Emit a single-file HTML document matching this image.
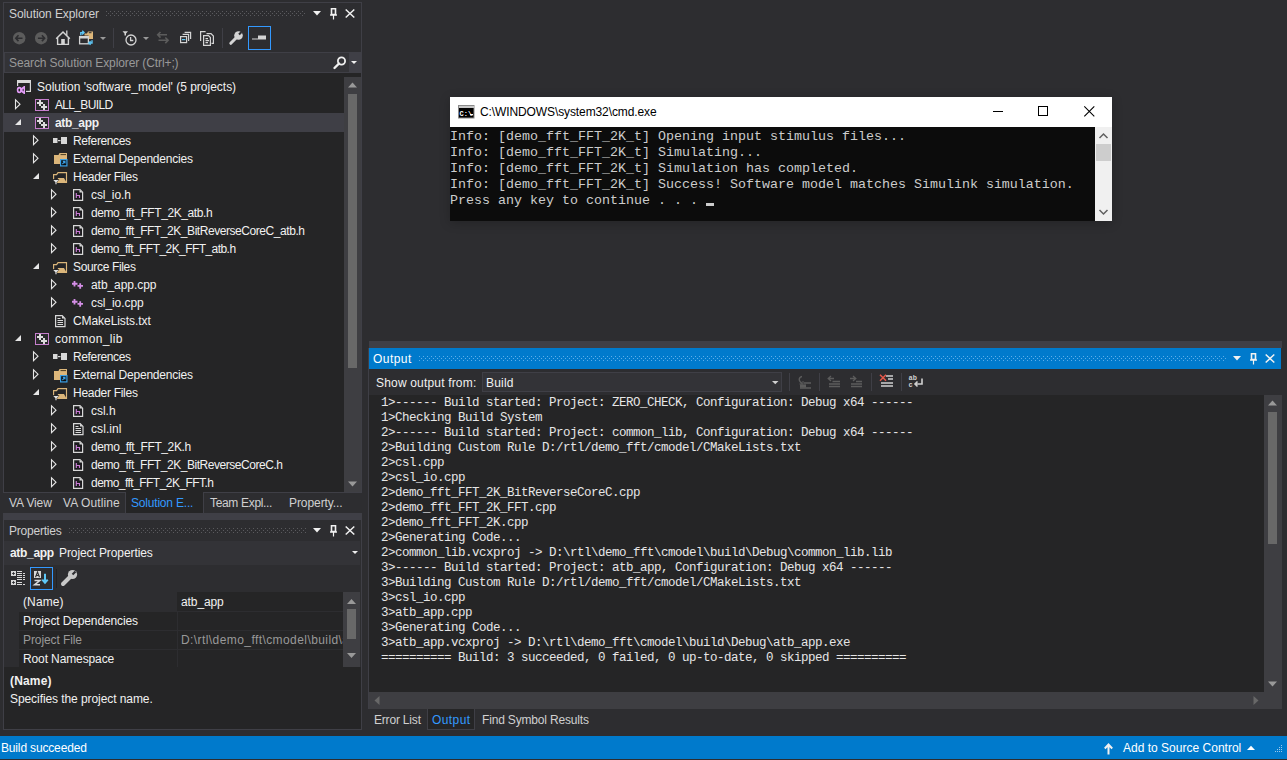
<!DOCTYPE html>
<html><head><meta charset="utf-8">
<style>
*{margin:0;padding:0;box-sizing:border-box}
html,body{width:1287px;height:760px;overflow:hidden;background:#2d2d30;font-family:"Liberation Sans",sans-serif;font-size:12px;color:#f1f1f1}
.a{position:absolute}
.t{position:absolute;white-space:pre;line-height:14px}
.mono{font-family:"Liberation Mono",monospace}
svg{position:absolute;overflow:visible}
.grip{position:absolute;height:5px;background-image:radial-gradient(circle,#5a5a5e 0.6px,transparent 0.9px);background-size:4px 4px;background-position:0 0}
</style></head><body>

<!-- ============ SOLUTION EXPLORER ============ -->
<div class="a" style="left:3px;top:2px;width:359px;height:491px;border:1px solid #3f3f46;border-bottom:none;background:#2d2d30"></div>
<div class="t" style="left:9px;top:7px;color:#d0d0d0;letter-spacing:-0.088px">Solution Explorer</div>
<svg style="left:106px;top:11px" width="200" height="5"><defs><pattern id="g1" x="0" y="0" width="4" height="4" patternUnits="userSpaceOnUse"><rect x="0" y="0" width="1" height="1" fill="#5a5a5e"/><rect x="2" y="2" width="1" height="1" fill="#5a5a5e"/></pattern></defs><rect x="0" y="0" width="200" height="5" fill="url(#g1)"/></svg>
<!--se-title-btns-->
<svg style="left:313px;top:11px" width="9" height="5"><path d="M0 0 H8 L4 4.5 Z" fill="#f1f1f1"/></svg>
<svg style="left:330px;top:8px" width="8" height="12"><path d="M1.5 0.8 H5.5 V6.5 H1.5 Z" fill="none" stroke="#f1f1f1" stroke-width="1.6"/><path d="M0 7 H7" stroke="#f1f1f1" stroke-width="1.4"/><path d="M3.5 7 V11.5" stroke="#f1f1f1" stroke-width="1.2"/></svg>
<svg style="left:345px;top:9px" width="11" height="9"><path d="M0.7 0.5 L9.3 8.5 M9.3 0.5 L0.7 8.5" stroke="#f1f1f1" stroke-width="1.5"/></svg>
<!--/se-title-btns-->

<!-- toolbar -->
<!--se-toolbar-->
<svg style="left:13px;top:32px" width="13" height="13"><circle cx="6.2" cy="6.2" r="6.2" fill="#5c5c5c"/><path d="M2.8 6.2 H9.5 M5.5 3.3 L2.8 6.2 L5.5 9.1" fill="none" stroke="#2d2d30" stroke-width="1.6"/></svg>
<svg style="left:35px;top:32px" width="13" height="13"><circle cx="6.2" cy="6.2" r="6.2" fill="#5c5c5c"/><path d="M2.9 6.2 H9.6 M6.9 3.3 L9.6 6.2 L6.9 9.1" fill="none" stroke="#2d2d30" stroke-width="1.6"/></svg>
<svg style="left:55px;top:30px" width="17" height="17"><path d="M1.2 8.8 L8 2 L14.8 8.8" fill="none" stroke="#d4d4d4" stroke-width="1.5"/><path d="M2.6 7.5 V14.4 H13.4 V7.5" fill="none" stroke="#d4d4d4" stroke-width="1.4"/><path d="M11.8 0.5 V5.5" stroke="#d4d4d4" stroke-width="1.3"/><rect x="6.2" y="9" width="3.6" height="5.5" fill="#d4d4d4"/></svg>
<svg style="left:78px;top:30px" width="17" height="16"><path d="M6.5 3.5 H9 L10 1.5 H15 V9 H10.5 V5.5 H6.5 Z" fill="#dcb67a"/><path d="M10.8 2.7 H13.5" stroke="#2d2d30" stroke-width="1"/><rect x="1.6" y="6.6" width="8.8" height="7.2" fill="#2d2d30" stroke="#d4d4d4" stroke-width="1.3"/><path d="M1.6 7.6 H10.4" stroke="#d4d4d4" stroke-width="1.8"/><path d="M2.8 5.2 V2.6 H5.8 M4.2 0.8 L6 2.6 L4.2 4.4" fill="none" stroke="#5ec8f8" stroke-width="1.4"/><path d="M14 10.2 V13 H11 M12.6 11.2 L10.8 13 L12.6 14.8" fill="none" stroke="#5ec8f8" stroke-width="1.4"/></svg>
<svg style="left:100px;top:37px" width="7" height="4"><path d="M0 0 H6 L3 3 Z" fill="#999999"/></svg>
<div class="a" style="left:113px;top:28px;width:1px;height:20px;background:#3f3f46"></div>
<svg style="left:122px;top:30px" width="16" height="16"><path d="M0.5 1.2 H6 L4 3.5 V5.5 H2.5 V3.5 Z" fill="#d4d4d4"/><circle cx="9" cy="10" r="5" fill="none" stroke="#d4d4d4" stroke-width="1.3"/><path d="M8.6 7 V10.5 H11.3" fill="none" stroke="#d4d4d4" stroke-width="1.3"/></svg>
<svg style="left:143px;top:37px" width="7" height="4"><path d="M0 0 H6 L3 3 Z" fill="#999999"/></svg>
<svg style="left:156px;top:31px" width="14" height="13"><path d="M11 3.8 H2 M4.5 1 L1.7 3.8 L4.5 6.6 M2.5 9.3 H11.8 M9.3 6.5 L12.1 9.3 L9.3 12.1" fill="none" stroke="#5c5c5c" stroke-width="1.6"/></svg>
<svg style="left:179px;top:30px" width="14" height="14"><rect x="1.6" y="6.6" width="6" height="6" fill="#2d2d30" stroke="#d4d4d4" stroke-width="1.2"/><path d="M3.6 4.4 H9.6 V11 M5.6 2.4 H11.6 V9" fill="none" stroke="#d4d4d4" stroke-width="1.2"/><path d="M3 9.6 H6.4" stroke="#5ec8f8" stroke-width="1.2"/></svg>
<svg style="left:199px;top:30px" width="16" height="16"><path d="M1.6 11 V1.6 H6.6" fill="none" stroke="#d4d4d4" stroke-width="1.2"/><path d="M7.5 3.6 H12 L14.4 6 V13.4 H12.5" fill="none" stroke="#d4d4d4" stroke-width="1.2"/><path d="M4.6 5.6 H9.5 L11.4 7.5 V15.4 H4.6 Z" fill="#2d2d30" stroke="#d4d4d4" stroke-width="1.2"/><path d="M6.5 8.6 H9 M6.5 10.6 H10 M6.5 12.6 H9" stroke="#d4d4d4" stroke-width="1.1"/></svg>
<div class="a" style="left:222px;top:28px;width:1px;height:20px;background:#3f3f46"></div>
<svg style="left:229px;top:30px" width="16" height="16"><path d="M1.8 13.3 L7 8" stroke="#d4d4d4" stroke-width="3" stroke-linecap="round"/><circle cx="9.5" cy="5.5" r="4.3" fill="#d4d4d4"/><path d="M10 4.5 L12.5 2" stroke="#2d2d30" stroke-width="2.2"/></svg>
<div class="a" style="left:248px;top:26px;width:23px;height:24px;border:1px solid #3399ff"></div>
<svg style="left:252px;top:35px" width="15" height="6"><rect x="6" y="0.5" width="8" height="4" fill="#d4d4d4"/><path d="M0 4 H6" stroke="#d4d4d4" stroke-width="1"/></svg>
<!--/se-toolbar-->

<!-- search -->
<div class="a" style="left:4px;top:52px;width:358px;height:21px;background:#333337;border:1px solid #3f3f46"></div>
<div class="a" style="left:349px;top:53px;width:12px;height:19px;background:#3f3f46"></div>
<div class="t" style="left:9px;top:56px;color:#999999;letter-spacing:-0.108px">Search Solution Explorer (Ctrl+;)</div>

<!-- tree -->
<div class="a" style="left:4px;top:73px;width:357px;height:419px;background:#252526;overflow:hidden" id="tree"></div>
<!--TREE-->
<svg style="left:17px;top:80px" width="16" height="16"><rect x="0" y="0" width="14" height="3" fill="#d8d8d8"/><rect x="0" y="0" width="1.2" height="6" fill="#d8d8d8"/><rect x="12.8" y="0" width="1.2" height="12" fill="#d8d8d8"/><rect x="9" y="10.8" width="5" height="1.2" fill="#d8d8d8"/><ellipse cx="2.3" cy="10" rx="1.7" ry="2.4" fill="none" stroke="#e29cf6" stroke-width="1.6"/><path d="M3.6 8.6 L7 6 H8 V14 H7 L3.6 11.4 Z M5.3 10 L6.6 8.6 V11.4 Z" fill="#e29cf6" fill-rule="evenodd"/></svg>
<div class="t" style="left:37px;top:80px;letter-spacing:-0.006px">Solution 'software_model' (5 projects)</div>
<svg style="left:15px;top:99px" width="7" height="11"><path d="M0.5 0.8 L0.5 9.6 L5 5.2 Z" fill="none" stroke="#e6e6e6" stroke-width="1.1"/></svg>
<svg style="left:35px;top:99px" width="15" height="13"><rect x="0.5" y="0.5" width="13" height="11" fill="#2a2a2c" stroke="#c67fcc" stroke-width="1"/><path d="M4 1 h2 v2 h2 v2 h-2 v2 h-2 v-2 h-2 v-2 h2 Z M8 5 h2 v2 h2 v2 h-2 v2 h-2 v-2 h-2 v-2 h2 Z" fill="#dcdcdc"/></svg>
<div class="t" style="left:55px;top:98px;letter-spacing:-0.664px">ALL_BUILD</div>
<div class="a" style="left:4px;top:113px;width:340px;height:19px;background:#3f3f46"></div>
<svg style="left:15px;top:119px" width="7" height="7"><path d="M6 0 L6 6 L0 6 Z" fill="#e6e6e6"/></svg>
<svg style="left:35px;top:117px" width="15" height="13"><rect x="0.5" y="0.5" width="13" height="11" fill="#2a2a2c" stroke="#c67fcc" stroke-width="1"/><path d="M4 1 h2 v2 h2 v2 h-2 v2 h-2 v-2 h-2 v-2 h2 Z M8 5 h2 v2 h2 v2 h-2 v2 h-2 v-2 h-2 v-2 h2 Z" fill="#dcdcdc"/></svg>
<div class="t" style="left:55px;top:116px;font-weight:bold;letter-spacing:-0.331px">atb_app</div>
<svg style="left:33px;top:135px" width="7" height="11"><path d="M0.5 0.8 L0.5 9.6 L5 5.2 Z" fill="none" stroke="#e6e6e6" stroke-width="1.1"/></svg>
<svg style="left:53px;top:137px" width="15" height="8"><rect x="0" y="1" width="4.5" height="5" fill="#d8d8d8"/><rect x="5" y="3" width="2.5" height="1.2" fill="#d8d8d8"/><rect x="8" y="0" width="6" height="7" fill="#d8d8d8"/></svg>
<div class="t" style="left:73px;top:134px;letter-spacing:-0.367px">References</div>
<svg style="left:33px;top:153px" width="7" height="11"><path d="M0.5 0.8 L0.5 9.6 L5 5.2 Z" fill="none" stroke="#e6e6e6" stroke-width="1.1"/></svg>
<svg style="left:54px;top:153px" width="15" height="15"><path d="M0 2 H4.5 L5.5 0 H13 V6 H6 V11 H0 Z" fill="#dcb67a"/><path d="M6.5 1.6 H12" stroke="#4a3c22" stroke-width="1"/><rect x="6.6" y="6.6" width="6.3" height="6.3" fill="#0c0c0c" stroke="#3ba0e6" stroke-width="1.2"/><path d="M8.4 11 L11 8.4 M8.8 8.4 H11 V10.6" stroke="#3ba0e6" stroke-width="1.1" fill="none"/></svg>
<div class="t" style="left:73px;top:152px;letter-spacing:-0.204px">External Dependencies</div>
<svg style="left:33px;top:173px" width="7" height="7"><path d="M6 0 L6 6 L0 6 Z" fill="#e6e6e6"/></svg>
<svg style="left:53px;top:172px" width="15" height="14"><path d="M0.6 7.5 V2.6 H3.6 L5 0.6 H13.5 V10.5 H4" fill="#252526" stroke="#dcb67a" stroke-width="1.15"/><path d="M5 6 H11 L13.5 10.5 H4 Z" fill="#dcb67a"/><path d="M-0.5 7.3 H6.5 L4.2 10 V12.8 H1.8 V10 Z" fill="#252526"/><path d="M0.3 8 H5.7 L3.6 10.3 V12.2 H2.4 V10.3 Z" fill="#e0e0e0"/></svg>
<div class="t" style="left:73px;top:170px;letter-spacing:-0.286px">Header Files</div>
<svg style="left:51px;top:189px" width="7" height="11"><path d="M0.5 0.8 L0.5 9.6 L5 5.2 Z" fill="none" stroke="#e6e6e6" stroke-width="1.1"/></svg>
<svg style="left:73px;top:189px" width="11" height="13"><path d="M0.6 0.6 H7 L9.6 3.2 V11.4 H0.6 Z" fill="#1c1c1e" stroke="#d8d8d8" stroke-width="1.2"/><path d="M6.5 0.8 V3.6 H9.4 Z" fill="#d8d8d8"/><path d="M3.3 4 V9 M3.3 6.5 H6.5 V9" fill="none" stroke="#c97bd4" stroke-width="1.15"/></svg>
<div class="t" style="left:91px;top:188px;letter-spacing:-0.123px">csl_io.h</div>
<svg style="left:51px;top:207px" width="7" height="11"><path d="M0.5 0.8 L0.5 9.6 L5 5.2 Z" fill="none" stroke="#e6e6e6" stroke-width="1.1"/></svg>
<svg style="left:73px;top:207px" width="11" height="13"><path d="M0.6 0.6 H7 L9.6 3.2 V11.4 H0.6 Z" fill="#1c1c1e" stroke="#d8d8d8" stroke-width="1.2"/><path d="M6.5 0.8 V3.6 H9.4 Z" fill="#d8d8d8"/><path d="M3.3 4 V9 M3.3 6.5 H6.5 V9" fill="none" stroke="#c97bd4" stroke-width="1.15"/></svg>
<div class="t" style="left:91px;top:206px;letter-spacing:-0.412px">demo_fft_FFT_2K_atb.h</div>
<svg style="left:51px;top:225px" width="7" height="11"><path d="M0.5 0.8 L0.5 9.6 L5 5.2 Z" fill="none" stroke="#e6e6e6" stroke-width="1.1"/></svg>
<svg style="left:73px;top:225px" width="11" height="13"><path d="M0.6 0.6 H7 L9.6 3.2 V11.4 H0.6 Z" fill="#1c1c1e" stroke="#d8d8d8" stroke-width="1.2"/><path d="M6.5 0.8 V3.6 H9.4 Z" fill="#d8d8d8"/><path d="M3.3 4 V9 M3.3 6.5 H6.5 V9" fill="none" stroke="#c97bd4" stroke-width="1.15"/></svg>
<div class="t" style="left:91px;top:224px;letter-spacing:-0.443px">demo_fft_FFT_2K_BitReverseCoreC_atb.h</div>
<svg style="left:51px;top:243px" width="7" height="11"><path d="M0.5 0.8 L0.5 9.6 L5 5.2 Z" fill="none" stroke="#e6e6e6" stroke-width="1.1"/></svg>
<svg style="left:73px;top:243px" width="11" height="13"><path d="M0.6 0.6 H7 L9.6 3.2 V11.4 H0.6 Z" fill="#1c1c1e" stroke="#d8d8d8" stroke-width="1.2"/><path d="M6.5 0.8 V3.6 H9.4 Z" fill="#d8d8d8"/><path d="M3.3 4 V9 M3.3 6.5 H6.5 V9" fill="none" stroke="#c97bd4" stroke-width="1.15"/></svg>
<div class="t" style="left:91px;top:242px;letter-spacing:-0.561px">demo_fft_FFT_2K_FFT_atb.h</div>
<svg style="left:33px;top:263px" width="7" height="7"><path d="M6 0 L6 6 L0 6 Z" fill="#e6e6e6"/></svg>
<svg style="left:53px;top:262px" width="15" height="14"><path d="M0.6 7.5 V2.6 H3.6 L5 0.6 H13.5 V10.5 H4" fill="#252526" stroke="#dcb67a" stroke-width="1.15"/><path d="M5 6 H11 L13.5 10.5 H4 Z" fill="#dcb67a"/><path d="M-0.5 7.3 H6.5 L4.2 10 V12.8 H1.8 V10 Z" fill="#252526"/><path d="M0.3 8 H5.7 L3.6 10.3 V12.2 H2.4 V10.3 Z" fill="#e0e0e0"/></svg>
<div class="t" style="left:73px;top:260px;letter-spacing:-0.342px">Source Files</div>
<svg style="left:51px;top:279px" width="7" height="11"><path d="M0.5 0.8 L0.5 9.6 L5 5.2 Z" fill="none" stroke="#e6e6e6" stroke-width="1.1"/></svg>
<svg style="left:72px;top:281px" width="13" height="10"><path d="M2.5 0 V5.5 M0 2.75 H5.5 M8.2 2.2 V7.7 M5.5 4.95 H11" stroke="#d48ee6" stroke-width="1.8"/></svg>
<div class="t" style="left:91px;top:278px;letter-spacing:-0.060px">atb_app.cpp</div>
<svg style="left:51px;top:297px" width="7" height="11"><path d="M0.5 0.8 L0.5 9.6 L5 5.2 Z" fill="none" stroke="#e6e6e6" stroke-width="1.1"/></svg>
<svg style="left:72px;top:299px" width="13" height="10"><path d="M2.5 0 V5.5 M0 2.75 H5.5 M8.2 2.2 V7.7 M5.5 4.95 H11" stroke="#d48ee6" stroke-width="1.8"/></svg>
<div class="t" style="left:91px;top:296px;letter-spacing:-0.077px">csl_io.cpp</div>
<svg style="left:55px;top:315px" width="11" height="13"><path d="M0.6 0.6 H7.2 L10 3.4 V11.6 H0.6 Z" fill="#252526" stroke="#d8d8d8" stroke-width="1.2"/><path d="M7 0.6 V3.6 H10 Z" fill="#d8d8d8"/><path d="M2.5 3.5 H5.5 M2.5 5.5 H8 M2.5 7.5 H8 M2.5 9.5 H8" stroke="#d8d8d8" stroke-width="1"/></svg>
<div class="t" style="left:73px;top:314px;letter-spacing:-0.071px">CMakeLists.txt</div>
<svg style="left:15px;top:335px" width="7" height="7"><path d="M6 0 L6 6 L0 6 Z" fill="#e6e6e6"/></svg>
<svg style="left:35px;top:333px" width="15" height="13"><rect x="0.5" y="0.5" width="13" height="11" fill="#2a2a2c" stroke="#c67fcc" stroke-width="1"/><path d="M4 1 h2 v2 h2 v2 h-2 v2 h-2 v-2 h-2 v-2 h2 Z M8 5 h2 v2 h2 v2 h-2 v2 h-2 v-2 h-2 v-2 h2 Z" fill="#dcdcdc"/></svg>
<div class="t" style="left:55px;top:332px;letter-spacing:0.300px">common_lib</div>
<svg style="left:33px;top:351px" width="7" height="11"><path d="M0.5 0.8 L0.5 9.6 L5 5.2 Z" fill="none" stroke="#e6e6e6" stroke-width="1.1"/></svg>
<svg style="left:53px;top:353px" width="15" height="8"><rect x="0" y="1" width="4.5" height="5" fill="#d8d8d8"/><rect x="5" y="3" width="2.5" height="1.2" fill="#d8d8d8"/><rect x="8" y="0" width="6" height="7" fill="#d8d8d8"/></svg>
<div class="t" style="left:73px;top:350px;letter-spacing:-0.367px">References</div>
<svg style="left:33px;top:369px" width="7" height="11"><path d="M0.5 0.8 L0.5 9.6 L5 5.2 Z" fill="none" stroke="#e6e6e6" stroke-width="1.1"/></svg>
<svg style="left:54px;top:369px" width="15" height="15"><path d="M0 2 H4.5 L5.5 0 H13 V6 H6 V11 H0 Z" fill="#dcb67a"/><path d="M6.5 1.6 H12" stroke="#4a3c22" stroke-width="1"/><rect x="6.6" y="6.6" width="6.3" height="6.3" fill="#0c0c0c" stroke="#3ba0e6" stroke-width="1.2"/><path d="M8.4 11 L11 8.4 M8.8 8.4 H11 V10.6" stroke="#3ba0e6" stroke-width="1.1" fill="none"/></svg>
<div class="t" style="left:73px;top:368px;letter-spacing:-0.204px">External Dependencies</div>
<svg style="left:33px;top:389px" width="7" height="7"><path d="M6 0 L6 6 L0 6 Z" fill="#e6e6e6"/></svg>
<svg style="left:53px;top:388px" width="15" height="14"><path d="M0.6 7.5 V2.6 H3.6 L5 0.6 H13.5 V10.5 H4" fill="#252526" stroke="#dcb67a" stroke-width="1.15"/><path d="M5 6 H11 L13.5 10.5 H4 Z" fill="#dcb67a"/><path d="M-0.5 7.3 H6.5 L4.2 10 V12.8 H1.8 V10 Z" fill="#252526"/><path d="M0.3 8 H5.7 L3.6 10.3 V12.2 H2.4 V10.3 Z" fill="#e0e0e0"/></svg>
<div class="t" style="left:73px;top:386px;letter-spacing:-0.286px">Header Files</div>
<svg style="left:51px;top:405px" width="7" height="11"><path d="M0.5 0.8 L0.5 9.6 L5 5.2 Z" fill="none" stroke="#e6e6e6" stroke-width="1.1"/></svg>
<svg style="left:73px;top:405px" width="11" height="13"><path d="M0.6 0.6 H7 L9.6 3.2 V11.4 H0.6 Z" fill="#1c1c1e" stroke="#d8d8d8" stroke-width="1.2"/><path d="M6.5 0.8 V3.6 H9.4 Z" fill="#d8d8d8"/><path d="M3.3 4 V9 M3.3 6.5 H6.5 V9" fill="none" stroke="#c97bd4" stroke-width="1.15"/></svg>
<div class="t" style="left:91px;top:404px;letter-spacing:-0.018px">csl.h</div>
<svg style="left:51px;top:423px" width="7" height="11"><path d="M0.5 0.8 L0.5 9.6 L5 5.2 Z" fill="none" stroke="#e6e6e6" stroke-width="1.1"/></svg>
<svg style="left:73px;top:423px" width="11" height="13"><path d="M0.6 0.6 H7.2 L10 3.4 V11.6 H0.6 Z" fill="#252526" stroke="#d8d8d8" stroke-width="1.2"/><path d="M7 0.6 V3.6 H10 Z" fill="#d8d8d8"/><path d="M2.5 3.5 H5.5 M2.5 5.5 H8 M2.5 7.5 H8 M2.5 9.5 H8" stroke="#d8d8d8" stroke-width="1"/></svg>
<div class="t" style="left:91px;top:422px;letter-spacing:0.083px">csl.inl</div>
<svg style="left:51px;top:441px" width="7" height="11"><path d="M0.5 0.8 L0.5 9.6 L5 5.2 Z" fill="none" stroke="#e6e6e6" stroke-width="1.1"/></svg>
<svg style="left:73px;top:441px" width="11" height="13"><path d="M0.6 0.6 H7 L9.6 3.2 V11.4 H0.6 Z" fill="#1c1c1e" stroke="#d8d8d8" stroke-width="1.2"/><path d="M6.5 0.8 V3.6 H9.4 Z" fill="#d8d8d8"/><path d="M3.3 4 V9 M3.3 6.5 H6.5 V9" fill="none" stroke="#c97bd4" stroke-width="1.15"/></svg>
<div class="t" style="left:91px;top:440px;letter-spacing:-0.400px">demo_fft_FFT_2K.h</div>
<svg style="left:51px;top:459px" width="7" height="11"><path d="M0.5 0.8 L0.5 9.6 L5 5.2 Z" fill="none" stroke="#e6e6e6" stroke-width="1.1"/></svg>
<svg style="left:73px;top:459px" width="11" height="13"><path d="M0.6 0.6 H7 L9.6 3.2 V11.4 H0.6 Z" fill="#1c1c1e" stroke="#d8d8d8" stroke-width="1.2"/><path d="M6.5 0.8 V3.6 H9.4 Z" fill="#d8d8d8"/><path d="M3.3 4 V9 M3.3 6.5 H6.5 V9" fill="none" stroke="#c97bd4" stroke-width="1.15"/></svg>
<div class="t" style="left:91px;top:458px;letter-spacing:-0.453px">demo_fft_FFT_2K_BitReverseCoreC.h</div>
<svg style="left:51px;top:477px" width="7" height="11"><path d="M0.5 0.8 L0.5 9.6 L5 5.2 Z" fill="none" stroke="#e6e6e6" stroke-width="1.1"/></svg>
<svg style="left:73px;top:477px" width="11" height="13"><path d="M0.6 0.6 H7 L9.6 3.2 V11.4 H0.6 Z" fill="#1c1c1e" stroke="#d8d8d8" stroke-width="1.2"/><path d="M6.5 0.8 V3.6 H9.4 Z" fill="#d8d8d8"/><path d="M3.3 4 V9 M3.3 6.5 H6.5 V9" fill="none" stroke="#c97bd4" stroke-width="1.15"/></svg>
<div class="t" style="left:91px;top:476px;letter-spacing:-0.540px">demo_fft_FFT_2K_FFT.h</div>
<!--/TREE-->

<!-- scrollbar -->
<div class="a" style="left:344px;top:77px;width:17px;height:415px;background:#3e3e42"></div>
<div class="a" style="left:348px;top:94px;width:9px;height:274px;background:#686868"></div>

<!-- bottom tabs -->
<div class="a" style="left:3px;top:492px;width:359px;height:1px;background:#3f3f46"></div>
<div class="a" style="left:125px;top:492px;width:79px;height:21px;background:#252526;border-left:1px solid #3f3f46;border-right:1px solid #3f3f46"></div>
<div class="t" style="left:9px;top:496px;color:#d0d0d0;letter-spacing:-0.128px">VA View</div>
<div class="t" style="left:63px;top:496px;color:#d0d0d0;letter-spacing:0.089px">VA Outline</div>
<div class="t" style="left:131px;top:496px;color:#3399ff;letter-spacing:-0.194px">Solution E...</div>
<div class="t" style="left:210px;top:496px;color:#d0d0d0;letter-spacing:-0.328px">Team Expl...</div>
<div class="t" style="left:289px;top:496px;color:#d0d0d0;letter-spacing:-0.079px">Property...</div>

<!-- ============ PROPERTIES ============ -->
<div class="a" style="left:3px;top:513px;width:359px;height:7px;background:#3f3f46"></div>
<div class="a" style="left:3px;top:520px;width:359px;height:210px;border:1px solid #3f3f46;border-top:none;background:#2d2d30"></div>
<div class="t" style="left:9px;top:524px;color:#d0d0d0;letter-spacing:-0.220px">Properties</div>
<svg style="left:69px;top:528px" width="237" height="5"><defs><pattern id="g2" x="0" y="0" width="4" height="4" patternUnits="userSpaceOnUse"><rect x="0" y="0" width="1" height="1" fill="#5a5a5e"/><rect x="2" y="2" width="1" height="1" fill="#5a5a5e"/></pattern></defs><rect x="0" y="0" width="237" height="5" fill="url(#g2)"/></svg>
<!--pr-title-btns-->
<svg style="left:313px;top:528px" width="9" height="5"><path d="M0 0 H8 L4 4.5 Z" fill="#f1f1f1"/></svg>
<svg style="left:330px;top:525px" width="8" height="12"><path d="M1.5 0.8 H5.5 V6.5 H1.5 Z" fill="none" stroke="#f1f1f1" stroke-width="1.6"/><path d="M0 7 H7" stroke="#f1f1f1" stroke-width="1.4"/><path d="M3.5 7 V11.5" stroke="#f1f1f1" stroke-width="1.2"/></svg>
<svg style="left:345px;top:526px" width="11" height="9"><path d="M0.7 0.5 L9.3 8.5 M9.3 0.5 L0.7 8.5" stroke="#f1f1f1" stroke-width="1.5"/></svg>
<!--/pr-title-btns-->
<div class="a" style="left:4px;top:541px;width:356px;height:24px;background:#333337"></div>
<div class="t" style="left:10px;top:546px;font-weight:bold;letter-spacing:-0.302px">atb_app</div>
<div class="t" style="left:59px;top:546px;letter-spacing:-0.093px">Project Properties</div>
<!--pr-toolbar-->
<svg style="left:11px;top:570px" width="16" height="16"><rect x="0" y="1" width="5" height="5" fill="#d8d8d8"/><path d="M1.2 3.5 H3.8 M2.5 2.2 V4.8" stroke="#2d2d30" stroke-width="1"/><rect x="0" y="10" width="5" height="5" fill="#d8d8d8"/><path d="M1.2 12.5 H3.8 M2.5 11.2 V13.8" stroke="#2d2d30" stroke-width="1"/><path d="M6 1.5 H11 M6 3.5 H11 M6 5.5 H11 M6 7.5 H11 M6 9.5 H11 M6 12.5 H11 M6 14.5 H11 M12 3.5 H14 M12 5.5 H14 M12 7.5 H14 M12 9.5 H14 M12 14.5 H14" stroke="#d8d8d8" stroke-width="1"/></svg>
<div class="a" style="left:30px;top:567px;width:23px;height:23px;border:1px solid #3399ff"></div>
<svg style="left:34px;top:571px" width="16" height="16"><rect x="0" y="0" width="7" height="7" fill="#d8d8d8"/><path d="M1.5 6.3 L3.5 1 L5.5 6.3 M2.3 4.5 H4.7" fill="none" stroke="#2d2d30" stroke-width="1.1"/><path d="M0.5 9.5 H5.8 L0.5 13.8 H6" fill="none" stroke="#d8d8d8" stroke-width="1.5"/><path d="M11 2.8 V11.5 M8.3 8.6 L11 11.8 L13.7 8.6" fill="none" stroke="#5ec8f8" stroke-width="2"/></svg>
<div class="a" style="left:56px;top:569px;width:1px;height:19px;background:#222224"></div>
<svg style="left:61px;top:569px" width="18" height="18"><path d="M2 15 L10 7" stroke="#c8c8c8" stroke-width="4" stroke-linecap="round"/><circle cx="11.5" cy="5.5" r="4.6" fill="#c8c8c8"/><path d="M11.5 5.5 L14.5 2.5" stroke="#2d2d30" stroke-width="2.2"/></svg>
<!--/pr-toolbar-->

<!--GRID-->
<div class="a" style="left:4px;top:592px;width:356px;height:75px;background:#2d2d30"></div>
<div class="a" style="left:177px;top:592px;width:166px;height:19px;background:#252526"></div>
<div class="a" style="left:19px;top:611px;width:324px;height:56px;background:#252526"></div>
<div class="a" style="left:19px;top:611px;width:324px;height:1px;background:#2d2d30"></div>
<div class="a" style="left:19px;top:630px;width:324px;height:1px;background:#2d2d30"></div>
<div class="a" style="left:19px;top:649px;width:324px;height:1px;background:#2d2d30"></div>
<div class="a" style="left:177px;top:611px;width:1px;height:56px;background:#2d2d30"></div>
<div class="t" style="left:23px;top:595px;letter-spacing:0.114px">(Name)</div>
<div class="t" style="left:181px;top:595px;letter-spacing:-0.099px">atb_app</div>
<div class="t" style="left:23px;top:614px;letter-spacing:-0.125px">Project Dependencies</div>
<div class="t" style="left:23px;top:633px;color:#999999;letter-spacing:-0.094px">Project File</div>
<div class="t" style="left:181px;top:633px;color:#999999;width:162px;overflow:hidden;letter-spacing:0.42px">D:\rtl\demo_fft\cmodel\build\atb_app.vcxproj</div>
<div class="t" style="left:23px;top:652px;letter-spacing:-0.116px">Root Namespace</div>
<div class="a" style="left:343px;top:592px;width:17px;height:75px;background:#3e3e42"></div>
<svg style="left:347px;top:599px" width="10" height="6"><path d="M0 5 L4.5 0 L9 5 Z" fill="#999999"/></svg>
<div class="a" style="left:347px;top:609px;width:9px;height:30px;background:#686868"></div>
<svg style="left:347px;top:653px" width="10" height="6"><path d="M0 0 L4.5 5 L9 0 Z" fill="#999999"/></svg>
<!--/GRID-->

<div class="a" style="left:4px;top:667px;width:357px;height:62px;background:#252526"></div>
<div class="t" style="left:10px;top:674px;font-weight:bold;letter-spacing:0.169px">(Name)</div>
<div class="t" style="left:10px;top:692px;letter-spacing:-0.076px">Specifies the project name.</div>

<!-- ============ OUTPUT ============ -->
<div class="a" style="left:369px;top:341px;width:913px;height:7px;background:#3f3f46"></div>
<div class="a" style="left:369px;top:348px;width:912px;height:21px;background:#007acc"></div>
<div class="t" style="left:373px;top:352px;color:#ffffff;letter-spacing:0.461px">Output</div>
<svg style="left:419px;top:356px" width="807" height="5"><defs><pattern id="g3" x="0" y="0" width="4" height="4" patternUnits="userSpaceOnUse"><rect x="0" y="0" width="1" height="1" fill="#5eaeea"/><rect x="2" y="2" width="1" height="1" fill="#5eaeea"/></pattern></defs><rect x="0" y="0" width="807" height="5" fill="url(#g3)"/></svg>
<!--out-title-btns-->
<svg style="left:1233px;top:356px" width="9" height="5"><path d="M0 0 H8 L4 4.5 Z" fill="#f1f1f1"/></svg>
<svg style="left:1250px;top:353px" width="8" height="12"><path d="M1.5 0.8 H5.5 V6.5 H1.5 Z" fill="none" stroke="#f1f1f1" stroke-width="1.6"/><path d="M0 7 H7" stroke="#f1f1f1" stroke-width="1.4"/><path d="M3.5 7 V11.5" stroke="#f1f1f1" stroke-width="1.2"/></svg>
<svg style="left:1265px;top:354px" width="11" height="9"><path d="M0.7 0.5 L9.3 8.5 M9.3 0.5 L0.7 8.5" stroke="#f1f1f1" stroke-width="1.5"/></svg>
<!--/out-title-btns-->
<div class="a" style="left:369px;top:369px;width:912px;height:26px;background:#2d2d30"></div>
<div class="t" style="left:376px;top:376px;letter-spacing:0.177px">Show output from:</div>
<div class="a" style="left:482px;top:372px;width:300px;height:20px;background:#333337;border:1px solid #3f3f46"></div>
<div class="t" style="left:486px;top:376px;letter-spacing:0.182px">Build</div>
<!--out-toolbar-->
<svg style="left:772px;top:381px" width="7" height="4"><path d="M0 0 H6.5 L3.25 3.3 Z" fill="#d0d0d0"/></svg>
<div class="a" style="left:789px;top:373px;width:1px;height:18px;background:#3f3f46"></div>
<div class="a" style="left:819px;top:373px;width:1px;height:18px;background:#3f3f46"></div>
<div class="a" style="left:871px;top:373px;width:1px;height:18px;background:#3f3f46"></div>
<div class="a" style="left:901px;top:373px;width:1px;height:18px;background:#3f3f46"></div>
<svg style="left:798px;top:375px" width="14" height="15"><path d="M4 1.5 A3 3 0 0 0 2 6.5 L4 8.5" fill="none" stroke="#5c5c5c" stroke-width="1.4"/><path d="M1.5 9 H5 V6" fill="none" stroke="#5c5c5c" stroke-width="1"/><path d="M6 8 H13 M2 10.5 H8 M2 13 H13" stroke="#5c5c5c" stroke-width="1.3"/><rect x="2" y="9.5" width="6" height="3" fill="#5c5c5c"/></svg>
<svg style="left:827px;top:375px" width="14" height="14"><path d="M7 3.5 H1.5 M4 1 L1.2 3.5 L4 6" fill="none" stroke="#5c5c5c" stroke-width="1.3"/><path d="M5.5 6.5 H13 M2 9 H13 M2 11.5 H13" stroke="#5c5c5c" stroke-width="1.3"/></svg>
<svg style="left:849px;top:375px" width="14" height="14"><path d="M1 3.5 H6.5 M4 1 L6.8 3.5 L4 6" fill="none" stroke="#5c5c5c" stroke-width="1.3"/><path d="M7 6.5 H13 M2 9 H13 M2 11.5 H13" stroke="#5c5c5c" stroke-width="1.3"/></svg>
<svg style="left:879px;top:374px" width="15" height="15"><path d="M7 2 H14 M9 5 H14 M2 9 H14 M2 12 H14" stroke="#d0d0d0" stroke-width="1.6"/><path d="M1 0.8 L7 6.8 M7 0.8 L1 6.8" stroke="#e8584a" stroke-width="1.5"/></svg>
<svg style="left:908px;top:374px" width="16" height="15"><text x="0.5" y="6" font-family="Liberation Mono" font-size="7" font-weight="bold" fill="#d0d0d0">ab</text><text x="0.5" y="12.5" font-family="Liberation Mono" font-size="7" font-weight="bold" fill="#d0d0d0">c</text><path d="M14 4.5 V10 H7 M9.5 7.5 L7 10 L9.5 12.5" fill="none" stroke="#d0d0d0" stroke-width="1.6"/></svg>
<!--/out-toolbar-->
<div class="a" style="left:369px;top:395px;width:912px;height:297px;background:#252526"></div>
<div class="a mono" id="outtext" style="left:381px;top:396px;font-size:12.5px;letter-spacing:-0.5px;line-height:15px;white-space:pre;color:#e6e6e6">1&gt;------ Build started: Project: ZERO_CHECK, Configuration: Debug x64 ------
1&gt;Checking Build System
2&gt;------ Build started: Project: common_lib, Configuration: Debug x64 ------
2&gt;Building Custom Rule D:/rtl/demo_fft/cmodel/CMakeLists.txt
2&gt;csl.cpp
2&gt;csl_io.cpp
2&gt;demo_fft_FFT_2K_BitReverseCoreC.cpp
2&gt;demo_fft_FFT_2K_FFT.cpp
2&gt;demo_fft_FFT_2K.cpp
2&gt;Generating Code...
2&gt;common_lib.vcxproj -&gt; D:\rtl\demo_fft\cmodel\build\Debug\common_lib.lib
3&gt;------ Build started: Project: atb_app, Configuration: Debug x64 ------
3&gt;Building Custom Rule D:/rtl/demo_fft/cmodel/CMakeLists.txt
3&gt;csl_io.cpp
3&gt;atb_app.cpp
3&gt;Generating Code...
3&gt;atb_app.vcxproj -&gt; D:\rtl\demo_fft\cmodel\build\Debug\atb_app.exe
========== Build: 3 succeeded, 0 failed, 0 up-to-date, 0 skipped ==========</div>
<!-- v scroll -->
<div class="a" style="left:1264px;top:395px;width:18px;height:297px;background:#3e3e42"></div>
<div class="a" style="left:368px;top:348px;width:1px;height:361px;background:#3f3f46"></div>
<div class="a" style="left:1268px;top:412px;width:9px;height:132px;background:#686868"></div>
<!-- h scroll -->
<div class="a" style="left:369px;top:692px;width:913px;height:17px;background:#3e3e42"></div>

<!-- tabs -->
<div class="a" style="left:427px;top:709px;width:48px;height:21px;background:#252526;border:1px solid #3f3f46;border-top:none"></div>
<div class="t" style="left:374px;top:713px;color:#d0d0d0;letter-spacing:-0.189px">Error List</div>
<div class="t" style="left:432px;top:713px;color:#3399ff;letter-spacing:0.411px">Output</div>
<div class="t" style="left:482px;top:713px;color:#d0d0d0;letter-spacing:-0.171px">Find Symbol Results</div>

<!-- ============ CMD ============ -->
<div class="a" style="left:450px;top:97px;width:662px;height:124px;background:#0c0c0c;box-shadow:0 2px 10px rgba(0,0,0,0.22)"></div>
<div class="a" style="left:450px;top:97px;width:662px;height:30px;background:#ffffff"></div>
<div class="t" style="left:480px;top:105px;color:#000000;letter-spacing:-0.106px">C:\WINDOWS\system32\cmd.exe</div>
<div class="a" style="left:1095px;top:127px;width:17px;height:94px;background:#f0f0f0"></div>
<div class="a" style="left:1096px;top:144px;width:15px;height:17px;background:#cdcdcd"></div>
<div class="a mono" style="left:450px;top:129px;font-size:13.33px;line-height:16px;white-space:pre;color:#cccccc">Info: [demo_fft_FFT_2K_t] Opening input stimulus files...
Info: [demo_fft_FFT_2K_t] Simulating...
Info: [demo_fft_FFT_2K_t] Simulation has completed.
Info: [demo_fft_FFT_2K_t] Success! Software model matches Simulink simulation.
Press any key to continue . . . </div>
<div class="a" style="left:706px;top:203px;width:8px;height:3px;background:#cccccc"></div>

<!--CMDX-->
<svg style="left:458px;top:105px" width="17" height="14"><rect x="0.5" y="0.5" width="15.5" height="12.5" fill="#000" stroke="#8a8a8a" stroke-width="1"/><rect x="1" y="1" width="15" height="2" fill="#c8c8c8"/><text x="1.5" y="10.5" font-family="Liberation Mono" font-size="7" font-weight="bold" fill="#ffffff">C:\</text><rect x="12" y="9" width="3" height="1.3" fill="#fff"/></svg>
<div class="a" style="left:993px;top:111px;width:10px;height:1px;background:#000"></div>
<div class="a" style="left:1038px;top:106px;width:10px;height:10px;border:1px solid #000"></div>
<svg style="left:1084px;top:106px" width="11" height="11"><path d="M0.3 0.3 L10.3 10.3 M10.3 0.3 L0.3 10.3" stroke="#000" stroke-width="1.1"/></svg>
<svg style="left:1099px;top:133px" width="9" height="6"><path d="M0.5 5 L4.5 1 L8.5 5" fill="none" stroke="#606060" stroke-width="1.5"/></svg>
<svg style="left:1099px;top:209px" width="9" height="6"><path d="M0.5 1 L4.5 5 L8.5 1" fill="none" stroke="#606060" stroke-width="1.5"/></svg>
<!--/CMDX-->
<!-- ============ STATUS BAR ============ -->
<div class="a" style="left:0;top:736px;width:1287px;height:23px;background:#007acc"></div>
<div class="t" style="left:1px;top:741px;color:#ffffff;letter-spacing:-0.157px">Build succeeded</div>
<div class="t" style="left:1123px;top:741px;color:#ffffff;letter-spacing:0.011px">Add to Source Control</div>

<!--EXTRA-->
<svg style="left:1104px;top:743px" width="10" height="12"><path d="M4.5 11.5 V2 M0.8 5.5 L4.5 1.5 L8.2 5.5" fill="none" stroke="#f0f0f0" stroke-width="2"/></svg>
<svg style="left:1247px;top:745px" width="9" height="6"><path d="M0 5 L4 0.8 L8 5 Z" fill="#ffffff"/></svg>
<svg style="left:1275px;top:745px" width="9" height="10"><g fill="#9cc8ec"><rect x="6" y="0" width="1" height="1"/><rect x="4" y="2" width="1" height="1"/><rect x="6" y="2" width="1" height="1"/><rect x="2" y="4" width="1" height="1"/><rect x="4" y="4" width="1" height="1"/><rect x="6" y="4" width="1" height="1"/><rect x="0" y="6" width="1" height="1"/><rect x="2" y="6" width="1" height="1"/><rect x="4" y="6" width="1" height="1"/><rect x="6" y="6" width="1" height="1"/></g></svg>
<!-- SE search magnifier -->
<svg style="left:333px;top:56px" width="14" height="14"><circle cx="8.5" cy="5" r="3.6" fill="none" stroke="#f0f0f0" stroke-width="1.8"/><path d="M6 7.5 L1.5 12" stroke="#f0f0f0" stroke-width="2.4" stroke-linecap="round"/></svg>
<svg style="left:351px;top:61px" width="7" height="4"><path d="M0 0 H6 L3 3 Z" fill="#f0f0f0"/></svg>
<!-- SE tree scroll arrows -->
<svg style="left:348px;top:82px" width="10" height="6"><path d="M0 5.5 L4.5 0.5 L9 5.5 Z" fill="#999999"/></svg>
<svg style="left:348px;top:481px" width="10" height="6"><path d="M0 0.5 L4.5 5.5 L9 0.5 Z" fill="#999999"/></svg>
<!-- output scroll arrows -->
<svg style="left:1268px;top:400px" width="10" height="6"><path d="M0 5.5 L4.5 0.5 L9 5.5 Z" fill="#999999"/></svg>
<svg style="left:1268px;top:681px" width="10" height="6"><path d="M0 0.5 L4.5 5.5 L9 0.5 Z" fill="#999999"/></svg>
<svg style="left:374px;top:696px" width="6" height="10"><path d="M5.5 0 L0.5 4.5 L5.5 9 Z" fill="#686868"/></svg>
<svg style="left:1253px;top:696px" width="6" height="10"><path d="M0.5 0 L5.5 4.5 L0.5 9 Z" fill="#686868"/></svg>
<!-- properties combo arrow -->
<svg style="left:352px;top:551px" width="7" height="4"><path d="M0 0 H6 L3 3 Z" fill="#f0f0f0"/></svg>
<!--/EXTRA-->
</body></html>
